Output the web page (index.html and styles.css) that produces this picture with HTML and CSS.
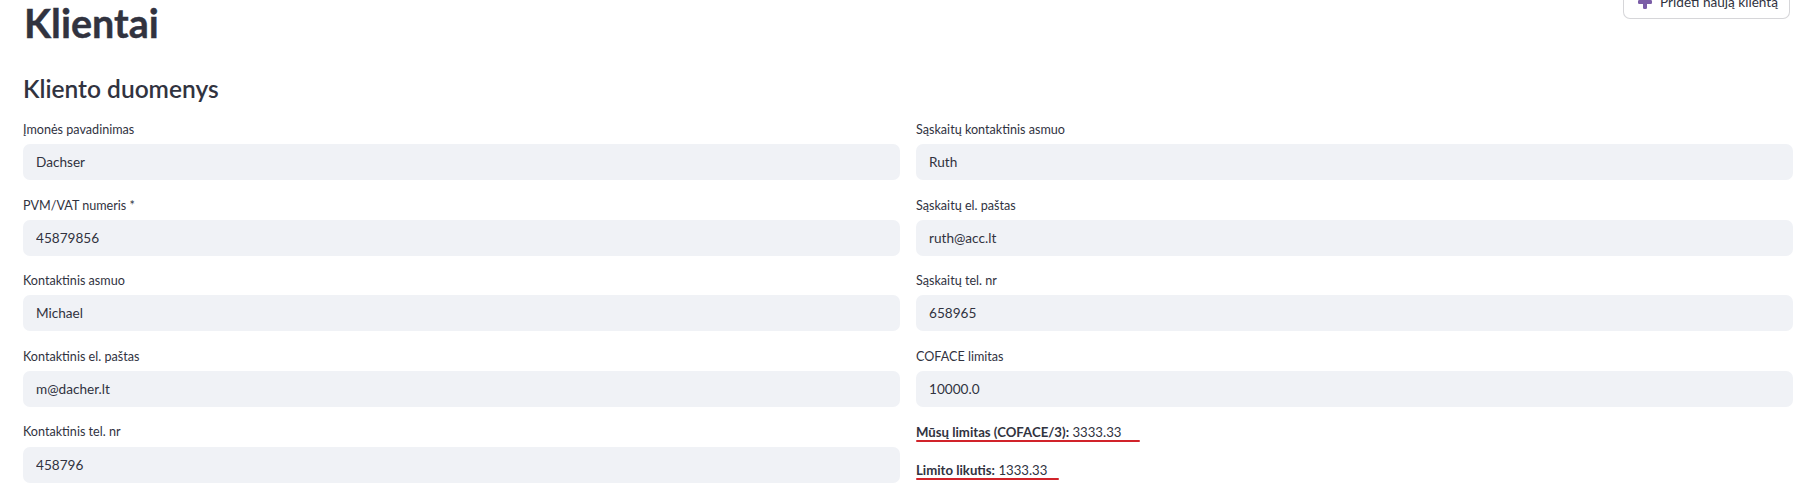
FILE: index.html
```html
<!DOCTYPE html>
<html lang="lt">
<head>
<meta charset="utf-8">
<title>Klientai</title>
<link rel="stylesheet" href="styles.css">
</head>
<body>
<main class="page">
  <header class="header">
    <h1 class="title">Klientai</h1>
    <button class="btn" type="button">
      <svg class="btn-icon" viewBox="0 0 14 14" aria-hidden="true">
        <rect x="5" y="0" width="4" height="14" rx="1.2"/>
        <rect x="0" y="5" width="14" height="4" rx="1.2"/>
      </svg>
      <span>Pridėti naują klientą</span>
    </button>
  </header>
  <h3 class="subtitle">Kliento duomenys</h3>
  <section class="grid">
    <div class="col">
      <div class="field"><label class="label">Įmonės pavadinimas</label><input class="input" value="Dachser" readonly></div>
      <div class="field"><label class="label">PVM/VAT numeris *</label><input class="input" value="45879856" readonly></div>
      <div class="field"><label class="label">Kontaktinis asmuo</label><input class="input" value="Michael" readonly></div>
      <div class="field"><label class="label">Kontaktinis el. paštas</label><input class="input" value="m@dacher.lt" readonly></div>
      <div class="field"><label class="label">Kontaktinis tel. nr</label><input class="input" value="458796" readonly></div>
    </div>
    <div class="col">
      <div class="field"><label class="label">Sąskaitų kontaktinis asmuo</label><input class="input" value="Ruth" readonly></div>
      <div class="field"><label class="label">Sąskaitų el. paštas</label><input class="input" value="ruth@acc.lt" readonly></div>
      <div class="field"><label class="label">Sąskaitų tel. nr</label><input class="input" value="658965" readonly></div>
      <div class="field"><label class="label">COFACE limitas</label><input class="input" value="10000.0" readonly></div>
      <div class="notes">
        <p class="note"><span class="mark mark-long"><strong>Mūsų limitas (COFACE/3):</strong> 3333.33</span></p>
        <p class="note"><span class="mark mark-short"><strong>Limito likutis:</strong> 1333.33</span></p>
      </div>
    </div>
  </section>
</main>
</body>
</html>
```

FILE: styles.css
```css
html, body {
  margin: 0;
  padding: 0;
  background: #ffffff;
}

body {
  font-family: "Lato", "Noto Sans", "Liberation Sans", sans-serif;
  color: #31333f;
  overflow: hidden;
}

.page {
  padding: 0 13px 0 23px;
}

.header {
  display: flex;
  justify-content: space-between;
  align-items: flex-start;
  height: 46px;
}

.title {
  margin: 0 0 0 1px;
  font-size: 39.5px;
  line-height: 46px;
  font-weight: 700;
  color: #31333f;
  -webkit-text-stroke: 0.4px #31333f;
}

.btn {
  margin-top: -16px;
  margin-right: 3px;
  height: 35px;
  box-sizing: border-box;
  display: inline-flex;
  align-items: center;
  gap: 8px;
  padding: 0 11px 0 14px;
  background: #ffffff;
  border: 1px solid rgba(49, 51, 63, 0.2);
  border-radius: 7px;
  font-family: inherit;
  font-size: 13.6px;
  color: #31333f;
}

.btn-icon {
  width: 14px;
  height: 14px;
  fill: #7b5ea7;
}

.subtitle {
  margin: 27px 0 0 0;
  font-size: 24.5px;
  line-height: 32px;
  font-weight: 600;
  color: #31333f;
}

.grid {
  margin-top: 14px;
  display: grid;
  grid-template-columns: 1fr 1fr;
  column-gap: 16px;
}

.col {
  display: flex;
  flex-direction: column;
  gap: 14.4px;
}

.field {
  display: flex;
  flex-direction: column;
}

.label {
  font-size: 12.6px;
  line-height: 18.6px;
  padding-top: 2px;
  margin-bottom: 4.6px;
  color: #31333f;
}

.input {
  height: 36px;
  box-sizing: border-box;
  width: 100%;
  border: none;
  outline: none;
  border-radius: 7px;
  background: #f0f2f6;
  padding: 0 13px;
  font-family: inherit;
  font-size: 13.6px;
  color: #31333f;
}

.notes {
  margin-top: 0;
  display: flex;
  flex-direction: column;
  gap: 14.4px;
}

.note {
  margin: 0;
  font-size: 13.2px;
  line-height: 23px;
}

.note strong {
  font-weight: 700;
}

.mark {
  position: relative;
  display: inline-block;
}

.mark::after {
  content: "";
  position: absolute;
  left: 0;
  top: 19px;
  height: 2px;
  border-radius: 1px;
  background: #d1232a;
}

.mark-long::after {
  width: calc(100% + 19px);
}

.mark-short::after {
  width: calc(100% + 12px);
}
```
